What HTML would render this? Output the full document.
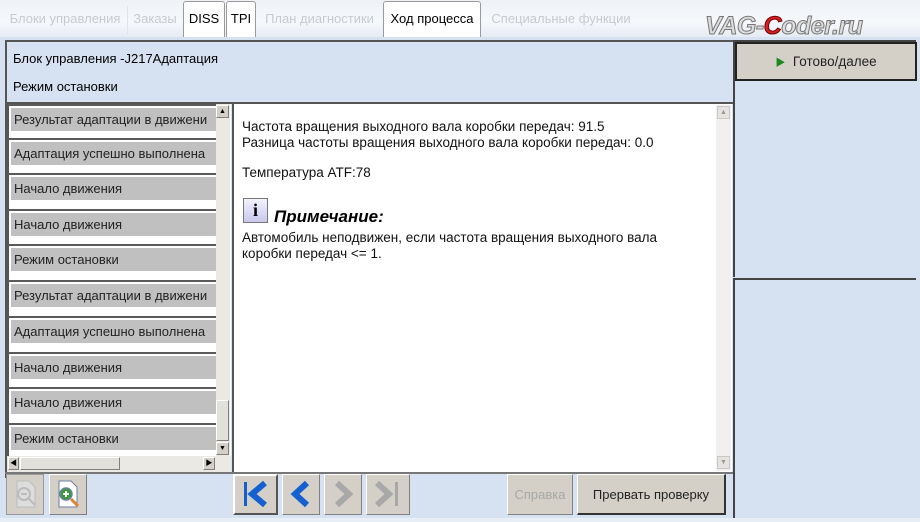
<!DOCTYPE html>
<html><head><meta charset="utf-8"><style>
*{margin:0;padding:0;box-sizing:border-box}
body{width:920px;height:522px;overflow:hidden;background:#d6e2f2;font-family:"Liberation Sans","Noto Sans CJK SC",sans-serif;position:relative;font-size:13px;color:#000}
.a{position:absolute}
.tabs{left:0;top:0;width:920px;height:37px;background:linear-gradient(#eef2f7,#f6f8fb 60%,#e6ecf4)}
.tab{position:absolute;top:0;height:37px;line-height:37px;font-size:13px;color:#c6cbd1;text-align:center}
.tab.on{color:#000;background:#fff;border:1px solid #9a9a9a;border-bottom:none;border-radius:3px 3px 0 0;top:1px;height:36px;line-height:34px}
.item{position:absolute;left:8px;width:208px}
.item .ln{position:absolute;left:0;top:0;width:208px;height:2px;background:#5a5a5a}
.item .bar{position:absolute;left:3px;top:4px;width:205px;height:23px;background:#c0c0c0;line-height:23px;padding-left:3px;white-space:nowrap;overflow:hidden;font-size:13px;color:#222}
.btn{position:absolute;background:#d4d0c8;border:1px solid #808080;border-left-color:#fff;border-top-color:#fff}
</style></head><body>
<div class="a tabs"></div>
<div class="tab" style="left:4px;width:122px">Блоки управления</div>
<div class="a" style="left:127px;top:6px;width:1px;height:28px;background:#e0e4ea"></div>
<div class="tab" style="left:128px;width:54px">Заказы</div>
<div class="tab on" style="left:183px;width:42px">DISS</div>
<div class="tab on" style="left:226px;width:30px">TPI</div>
<div class="tab" style="left:257px;width:125px">План диагностики</div>
<div class="tab on" style="left:383px;width:98px">Ход процесса</div>
<div class="tab" style="left:482px;width:158px">Специальные функции</div>
<div class="a" style="left:705px;top:12px;font:italic bold 25px 'Liberation Sans',sans-serif;color:#ddd;-webkit-text-stroke:1px #777;letter-spacing:-0.5px">VAG-<span style="color:#d42020;-webkit-text-stroke:1px #700">C</span>oder.ru</div>

<!-- left main panel -->
<div class="a" style="left:5px;top:40px;width:728px;height:438px;border-left:2px solid #555;border-top:2px solid #555"></div>
<div class="a" style="left:13px;top:51px">Блок управления -J217Адаптация</div>
<div class="a" style="left:13px;top:79px">Режим остановки</div>
<div class="a" style="left:7px;top:102px;width:726px;height:2px;background:#555"></div>

<!-- list -->
<div class="a" style="left:7px;top:104px;width:224px;height:368px;background:#fff;border-left:2px solid #555"></div>
<div class="item" style="top:104px"><div class="ln"></div><div class="bar">Результат адаптации в движени</div></div>
<div class="item" style="top:138px"><div class="ln"></div><div class="bar">Адаптация успешно выполнена</div></div>
<div class="item" style="top:173px"><div class="ln"></div><div class="bar">Начало движения</div></div>
<div class="item" style="top:209px"><div class="ln"></div><div class="bar">Начало движения</div></div>
<div class="item" style="top:244px"><div class="ln"></div><div class="bar">Режим остановки</div></div>
<div class="item" style="top:280px"><div class="ln"></div><div class="bar">Результат адаптации в движени</div></div>
<div class="item" style="top:316px"><div class="ln"></div><div class="bar">Адаптация успешно выполнена</div></div>
<div class="item" style="top:352px"><div class="ln"></div><div class="bar">Начало движения</div></div>
<div class="item" style="top:387px"><div class="ln"></div><div class="bar">Начало движения</div></div>
<div class="item" style="top:423px"><div class="ln"></div><div class="bar">Режим остановки</div></div>
<!-- vscroll -->
<div class="a" style="left:216px;top:104px;width:14px;height:352px;background:#ebe9e4"></div>
<div class="btn" style="left:216px;top:105px;width:13px;height:13px;font-size:7px;text-align:center;line-height:11px">▲</div>
<div class="btn" style="left:216px;top:400px;width:13px;height:41px;background:#e2e0da"></div>
<div class="btn" style="left:216px;top:442px;width:13px;height:13px;font-size:7px;text-align:center;line-height:11px">▼</div>
<!-- hscroll -->
<div class="a" style="left:7px;top:456px;width:224px;height:16px;background:#ebe9e4"></div>
<div class="btn" style="left:8px;top:457px;width:11px;height:13px;font-size:7px;line-height:11px;text-align:center">◀</div>
<div class="btn" style="left:20px;top:457px;width:100px;height:13px;background:#e2e0da"></div>
<div class="btn" style="left:203px;top:457px;width:12px;height:13px;font-size:7px;line-height:11px;text-align:center">▶</div>

<!-- content pane -->
<div class="a" style="left:232px;top:104px;width:500px;height:368px;background:#fff;border-left:2px solid #555"></div>
<div class="a" style="left:716px;top:105px;width:15px;height:366px;background:#f1f0ee"></div>
<div class="a" style="left:717px;top:106px;width:13px;height:13px;background:#e6e4e0;border:1px solid #c8c8c8;font-size:7px;color:#999;text-align:center;line-height:11px">▲</div>
<div class="a" style="left:717px;top:456px;width:13px;height:13px;background:#e6e4e0;border:1px solid #c8c8c8;font-size:7px;color:#999;text-align:center;line-height:11px">▼</div>
<div class="a" style="left:242px;top:119px;line-height:16px;font-size:13.5px;color:#111">Частота вращения выходного вала коробки передач: 91.5<br>Разница частоты вращения выходного вала коробки передач: 0.0</div>
<div class="a" style="left:242px;top:165px;font-size:13.5px;color:#111">Температура ATF:78</div>
<div class="a" style="left:243px;top:198px;width:25px;height:25px;border:1px solid #777;background:linear-gradient(#f2f2ff,#c8c8ee);text-align:center;font:bold 18px 'Liberation Serif',serif;line-height:22px">i</div>
<div class="a" style="left:274px;top:207px;font:italic bold 17px 'Liberation Sans',sans-serif">Примечание:</div>
<div class="a" style="left:242px;top:230px;line-height:16px;font-size:13.5px;color:#111">Автомобиль неподвижен, если частота вращения выходного вала<br>коробки передач &lt;= 1.</div>

<!-- bottom toolbar -->
<div class="a" style="left:5px;top:472px;width:728px;height:2px;background:#777"></div>
<div class="btn" style="left:6px;top:474px;width:38px;height:41px;border-color:#999"><svg width="36" height="39" viewBox="0 0 36 39"><path d="M10 6h12l6 6v20H10z" fill="#ddd" stroke="#bbb"/><circle cx="17" cy="19" r="6" fill="none" stroke="#bbb" stroke-width="2"/><path d="M14 19h6M21 23l7 7" stroke="#bbb" stroke-width="2"/></svg></div>
<div class="btn" style="left:49px;top:474px;width:38px;height:41px"><svg width="36" height="39" viewBox="0 0 36 39"><path d="M9 6h12l6 6v20H9z" fill="#fff" stroke="#6a7fa0"/><circle cx="16" cy="19" r="6" fill="#3a9a3a" stroke="#6a7fa0" stroke-width="1.5"/><path d="M13 19h6M16 16v6" stroke="#fff" stroke-width="2"/><path d="M21 24l7 7" stroke="#e08030" stroke-width="3"/></svg></div>
<div class="btn" style="left:233px;top:474px;width:45px;height:41px;border:2px solid #555;border-left-color:#fff;border-top-color:#fff"><svg width="41" height="37" viewBox="0 0 41 37"><rect x="9" y="6" width="3" height="24" fill="#1560d0"/><path d="M30 7l-13 11 13 11" fill="none" stroke="#1560d0" stroke-width="6"/></svg></div>
<div class="btn" style="left:282px;top:474px;width:38px;height:41px"><svg width="36" height="39" viewBox="0 0 36 39"><path d="M24 8l-12 11 12 11" fill="none" stroke="#1560d0" stroke-width="6"/></svg></div>
<div class="btn" style="left:324px;top:474px;width:38px;height:41px"><svg width="36" height="39" viewBox="0 0 36 39"><path d="M12 8l12 11-12 11" fill="none" stroke="#a8a8a8" stroke-width="6"/></svg></div>
<div class="btn" style="left:366px;top:474px;width:44px;height:41px"><svg width="42" height="39" viewBox="0 0 42 39"><path d="M10 8l12 11-12 11" fill="none" stroke="#a8a8a8" stroke-width="6"/><rect x="28" y="7" width="3" height="24" fill="#a8a8a8"/></svg></div>
<div class="btn" style="left:507px;top:474px;width:66px;height:41px;color:#a8a8a8;text-align:center;line-height:40px">Справка</div>
<div class="btn" style="left:577px;top:474px;width:149px;height:41px;border-right:2px solid #333;border-bottom:2px solid #333;text-align:center;line-height:40px;color:#222">Прервать проверку</div>

<!-- right column -->
<div class="a" style="left:733px;top:40px;width:183px;height:237px;border-left:2px solid #444;border-top:2px solid #444"></div>
<div class="a" style="left:733px;top:278px;width:183px;height:240px;border-left:2px solid #444;border-top:2px solid #444"></div>
<div class="a" style="left:735px;top:42px;width:182px;height:39px;background:#d4d0c8;border:2px solid #222;text-align:center;line-height:35px;font-size:13.5px;color:#222"><span style="color:#1a8a1a;font-size:10px">▶</span>&nbsp; Готово/далее</div>
<div class="a" style="left:0;top:518px;width:920px;height:4px;background:#e8eef6"></div>
</body></html>
